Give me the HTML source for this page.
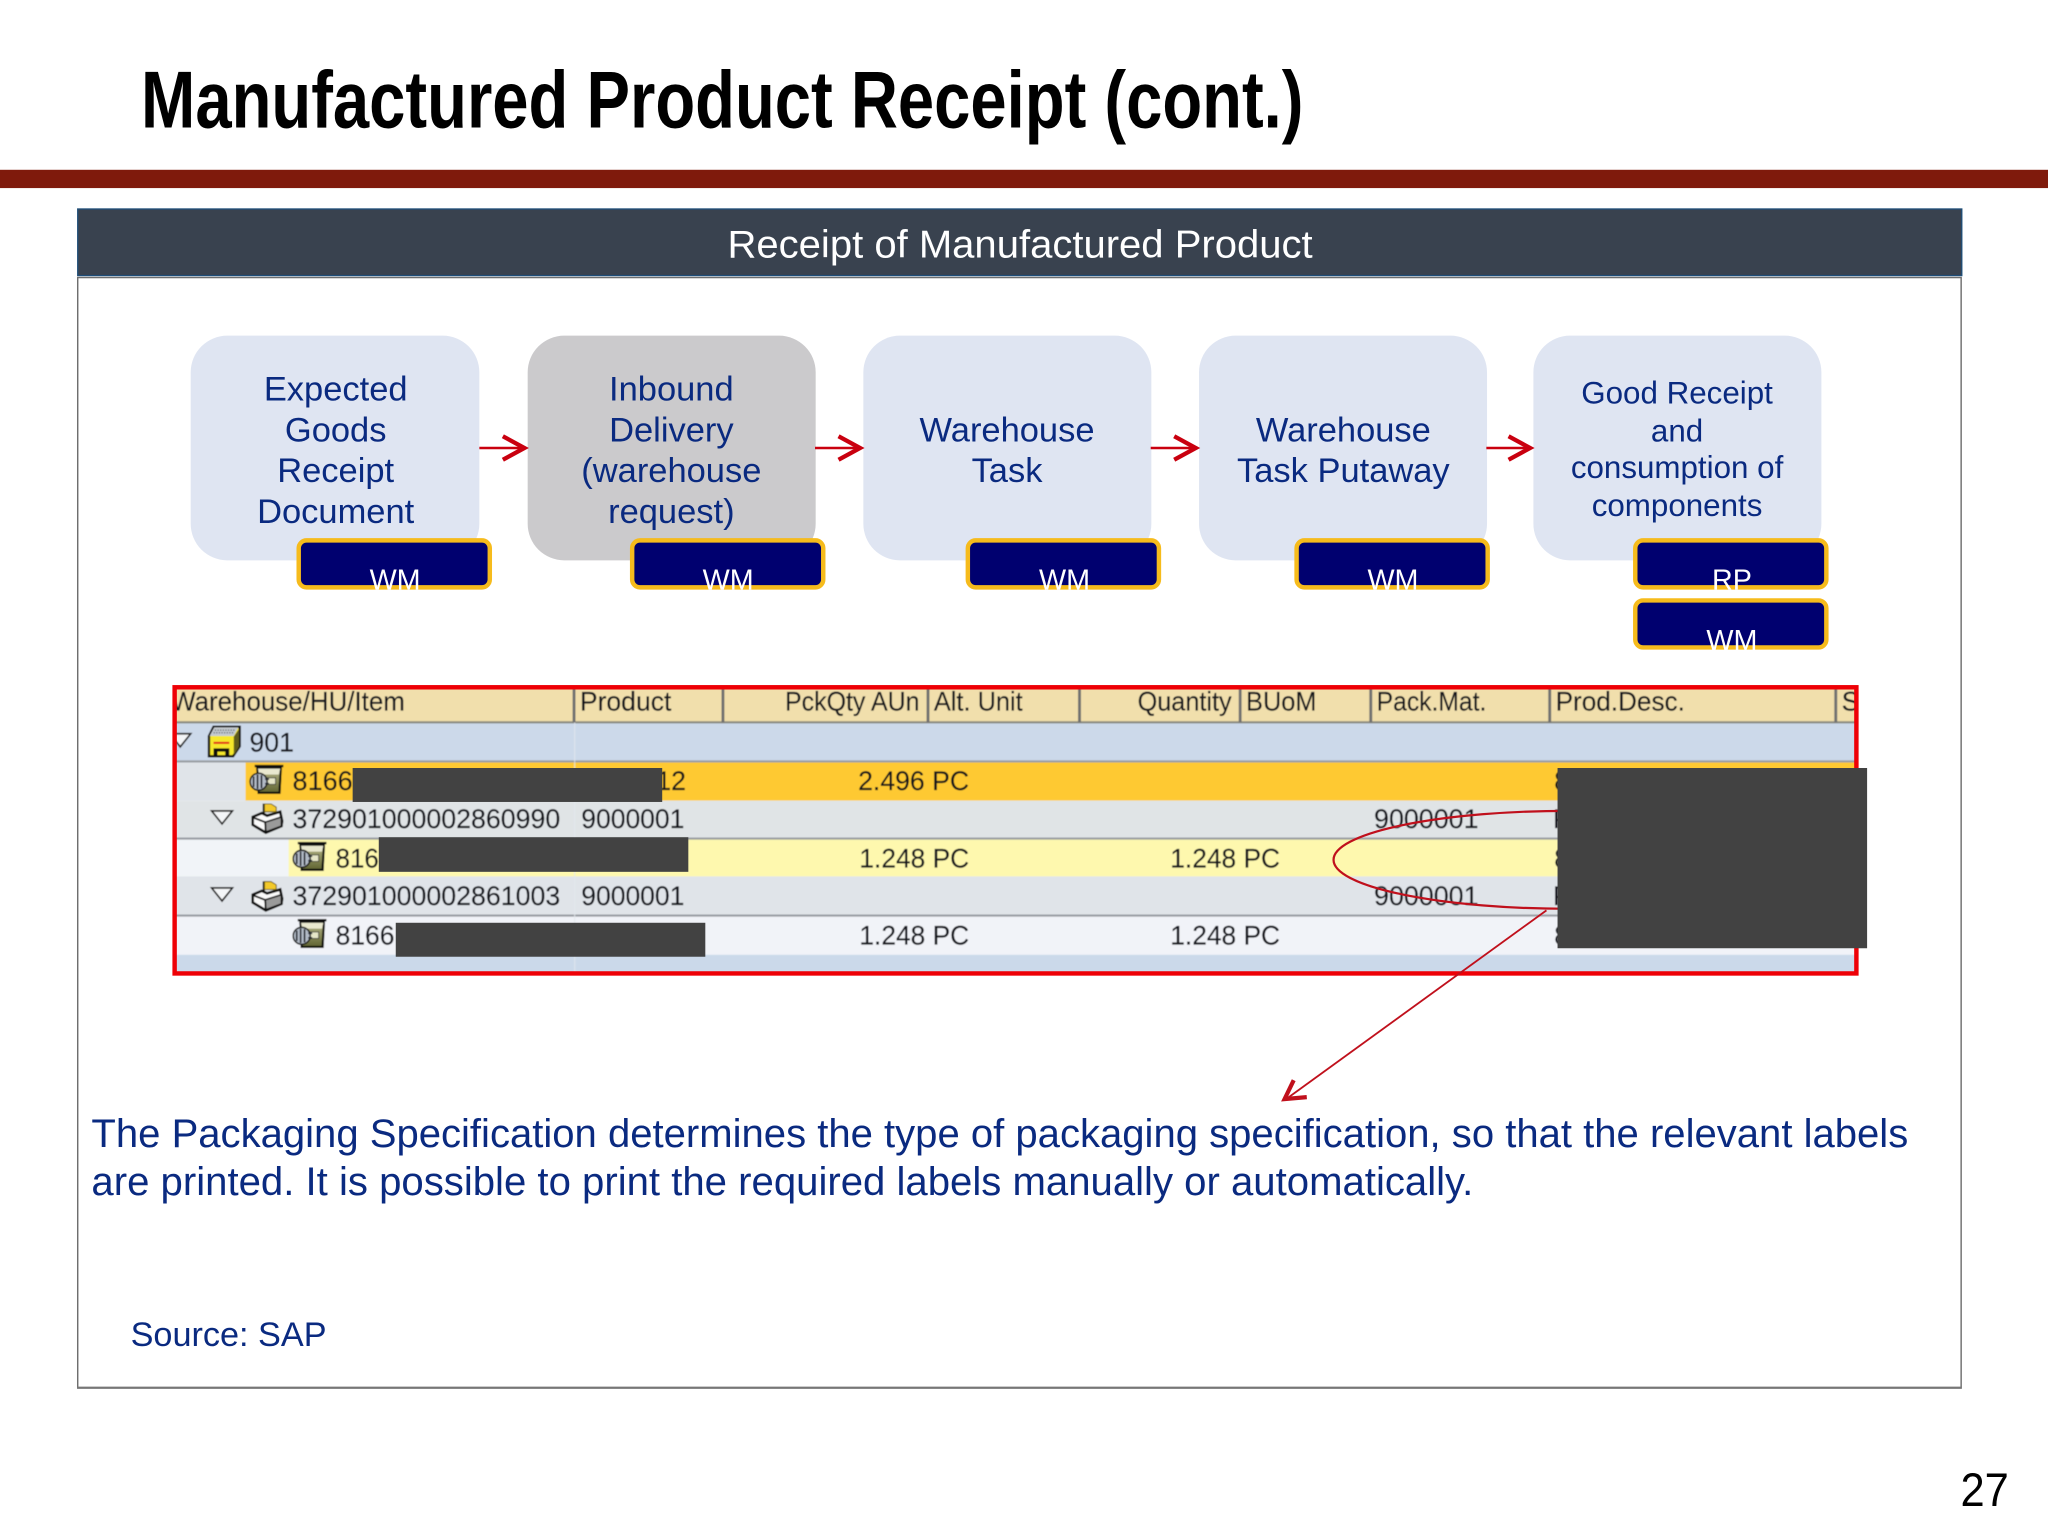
<!DOCTYPE html>
<html lang="en">
<head>
<meta charset="utf-8">
<title>Manufactured Product Receipt (cont.)</title>
<style>
html,body{margin:0;padding:0;background:#fff;width:2048px;height:1536px;overflow:hidden}
svg{display:block;width:2048px;height:1536px}
text{font-family:"Liberation Sans",Arial,sans-serif}
.b{fill:#0a2a80;font-size:26.4px;text-anchor:middle}
.s{fill:#0a2a80;font-size:24px;text-anchor:middle}
.w{fill:#fff;font-size:22px;text-anchor:middle}
.t{fill:#12161e;font-size:20.4px;stroke:#12161e;stroke-width:.12px}
.badge{fill:#00006f;stroke:#f6bb1c;stroke-width:3.4}
.box{fill:#dfe5f2}
.arr{fill:none;stroke:#c9000f}
.sep{stroke:#6f6f6f;stroke-width:2.2}
.rowsep{stroke:#9a9ea3;stroke-width:1.6}
</style>
</head>
<body>
<svg xmlns="http://www.w3.org/2000/svg" viewBox="0 0 1568 1176">
<defs>
<clipPath id="tc"><rect x="135" y="526" width="1285" height="219"/></clipPath>
<filter id="soft" x="-2%" y="-2%" width="104%" height="104%"><feGaussianBlur stdDeviation="0.32"/></filter>
<linearGradient id="olive" x1="0" y1="0" x2="0" y2="1"><stop offset="0" stop-color="#b9b98c"/><stop offset="1" stop-color="#5f6330"/></linearGradient>
<g id="bolt">
  <path d="M6 3 L24 3 L23 22 L7 22 Z" fill="url(#olive)" stroke="#111" stroke-width="1.7"/>
  <path d="M6.5 3.5 H23.5 L22.5 8 H7.5 Z" fill="#e9e8cf"/>
  <rect x="4" y="0.6" width="22" height="1.8" fill="#111"/>
  <rect x="13" y="10.5" width="7" height="5" fill="#e6e6c8" stroke="#333" stroke-width=".6"/>
  <ellipse cx="7" cy="13.5" rx="6.5" ry="6.5" fill="#b4bcc8" stroke="#1a1a1a" stroke-width="1.2"/>
  <path d="M3.2 9.5v8M6.2 8v11M9.2 8.5v10M12 11.5h3M12 15h3" stroke="#20262e" stroke-width="1.3" fill="none"/>
</g>
<g id="pack">
  <path d="M1 11 L8 8 L12 10 L22 7 L23.5 14 L23 18 L11 23 L1 17 Z" fill="#fafafa" stroke="#0c0c0c" stroke-width="2"/>
  <path d="M10.5 15 L23 11 L23 18 L11 22.5 Z" fill="#9a9a9a" stroke="#111" stroke-width="1.2"/>
  <path d="M1.5 11.5 L10.5 15 L11 22" fill="none" stroke="#111" stroke-width="1.4"/>
  <path d="M9.5 9 V0.8" stroke="#111" stroke-width="1.7"/>
  <path d="M10 1 L15 1 L19 3.5 L19 7 L10 7 Z" fill="#f3c92a" stroke="#6a5a10" stroke-width=".7"/>
</g>
<path id="tri" d="M1 0.8 H17 L9 10.8 Z" fill="#f4f6f8" stroke="#222" stroke-width="1.3"/>
</defs>

<rect width="1568" height="1176" fill="#fff"/>

<text x="108" y="97.5" font-size="61.5" font-weight="700" fill="#000" textLength="890" lengthAdjust="spacingAndGlyphs">Manufactured Product Receipt (cont.)</text>
<rect x="0" y="130" width="1568" height="14" fill="#7f1a0c"/>

<rect x="59.5" y="160" width="1442.5" height="51" fill="#39424f" stroke="#1f4e79" stroke-width="1"/>
<text x="781" y="197" font-size="30" fill="#fff" text-anchor="middle" textLength="448" lengthAdjust="spacingAndGlyphs">Receipt of Manufactured Product</text>
<rect x="59.5" y="212.5" width="1442" height="850" fill="#fff" stroke="#6e6e6e" stroke-width="1.1"/>
<line x1="59" y1="1062.5" x2="1502" y2="1062.5" stroke="#777" stroke-width="1.8"/>

<!-- process boxes -->
<rect class="box" x="146" y="257" width="221" height="172" rx="28"/>
<rect x="404" y="257" width="220.5" height="172" rx="28" fill="#cbcacc"/>
<rect class="box" x="661" y="257" width="220.5" height="172" rx="28"/>
<rect class="box" x="918" y="257" width="220.5" height="172" rx="28"/>
<rect class="box" x="1174" y="257" width="220.5" height="172" rx="28"/>

<text class="b" x="257" y="306.5">Expected</text>
<text class="b" x="257" y="338">Goods</text>
<text class="b" x="257" y="369">Receipt</text>
<text class="b" x="257" y="400.5">Document</text>

<text class="b" x="514" y="306.5">Inbound</text>
<text class="b" x="514" y="338">Delivery</text>
<text class="b" x="514" y="369">(warehouse</text>
<text class="b" x="514" y="400.5">request)</text>

<text class="b" x="771" y="338">Warehouse</text>
<text class="b" x="771" y="369">Task</text>

<text class="b" x="1028.5" y="338">Warehouse</text>
<text class="b" x="1028.5" y="369">Task Putaway</text>

<text class="s" x="1284" y="309">Good Receipt</text>
<text class="s" x="1284" y="338">and</text>
<text class="s" x="1284" y="366">consumption of</text>
<text class="s" x="1284" y="395">components</text>

<!-- arrows -->
<g class="arr">
  <path d="M367 343H400" stroke-width="2"/><path d="M385 334L401.5 343L385 352" stroke-width="3.3"/>
  <path d="M624 343H657" stroke-width="2"/><path d="M642 334L658.5 343L642 352" stroke-width="3.3"/>
  <path d="M881 343H914" stroke-width="2"/><path d="M899 334L915.5 343L899 352" stroke-width="3.3"/>
  <path d="M1138 343H1170" stroke-width="2"/><path d="M1155 334L1171.5 343L1155 352" stroke-width="3.3"/>
</g>

<!-- badges -->
<rect class="badge" x="228.7" y="413.7" width="146.3" height="36" rx="6"/>
<rect class="badge" x="484" y="413.7" width="146.3" height="36" rx="6"/>
<rect class="badge" x="741" y="413.7" width="146.3" height="36" rx="6"/>
<rect class="badge" x="992.7" y="413.7" width="146.3" height="36" rx="6"/>
<rect class="badge" x="1252" y="413.7" width="146.3" height="36" rx="6"/>
<rect class="badge" x="1252" y="459.7" width="146.3" height="36" rx="6"/>
<text class="w" x="302.5" y="451.5">WM</text>
<text class="w" x="557.5" y="451.5">WM</text>
<text class="w" x="815" y="451.5">WM</text>
<text class="w" x="1066.5" y="451.5">WM</text>
<text class="w" x="1326" y="451.5">RP</text>
<text class="w" x="1326" y="497.5">WM</text>

<!-- table -->
<g clip-path="url(#tc)"><g filter="url(#soft)">
  <rect x="133" y="526" width="1290" height="27" fill="#f1dfac"/>
  <rect x="133" y="553" width="1290" height="30" fill="#ccd9ea"/>
  <rect x="133" y="583" width="1290" height="30" fill="#e0e4e9"/>
  <rect x="188" y="583" width="1235" height="30" fill="#fec933"/>
  <rect x="133" y="613" width="1290" height="29" fill="#e0e4e6"/>
  <rect x="133" y="642" width="1290" height="29" fill="#f1f4f8"/>
  <rect x="221" y="642" width="1202" height="29" fill="#fef8ae"/>
  <rect x="133" y="671" width="1290" height="30" fill="#e0e4e9"/>
  <rect x="133" y="701" width="1290" height="30" fill="#f1f3f8"/>
  <rect x="133" y="731" width="1290" height="15" fill="#cbd9ea"/>

  <line x1="133" y1="553" x2="1423" y2="553" stroke="#8a8a80" stroke-width="1.6"/>
  <line class="rowsep" x1="133" y1="583" x2="1423" y2="583"/>
  <line class="rowsep" x1="133" y1="642" x2="1423" y2="642"/>
  <line class="rowsep" x1="133" y1="701" x2="1423" y2="701"/>
  <line x1="440" y1="553" x2="440" y2="745" stroke="#e4e8ee" stroke-width="1" opacity=".7"/>

  <line class="sep" x1="439.5" y1="526" x2="439.5" y2="553"/>
  <line class="sep" x1="553.5" y1="526" x2="553.5" y2="553"/>
  <line class="sep" x1="710.5" y1="526" x2="710.5" y2="553"/>
  <line class="sep" x1="826.5" y1="526" x2="826.5" y2="553"/>
  <line class="sep" x1="949.5" y1="526" x2="949.5" y2="553"/>
  <line class="sep" x1="1049.5" y1="526" x2="1049.5" y2="553"/>
  <line class="sep" x1="1186.5" y1="526" x2="1186.5" y2="553"/>
  <line class="sep" x1="1405.5" y1="526" x2="1405.5" y2="553"/>

  <text class="t" x="131" y="544" textLength="179" lengthAdjust="spacingAndGlyphs">Warehouse/HU/Item</text>
  <text class="t" x="444" y="544" textLength="70" lengthAdjust="spacingAndGlyphs">Product</text>
  <text class="t" x="601" y="544" textLength="103" lengthAdjust="spacingAndGlyphs">PckQty AUn</text>
  <text class="t" x="715" y="544" textLength="68" lengthAdjust="spacingAndGlyphs">Alt. Unit</text>
  <text class="t" x="871" y="544" textLength="72" lengthAdjust="spacingAndGlyphs">Quantity</text>
  <text class="t" x="954" y="544" textLength="54" lengthAdjust="spacingAndGlyphs">BUoM</text>
  <text class="t" x="1054" y="544" textLength="84" lengthAdjust="spacingAndGlyphs">Pack.Mat.</text>
  <text class="t" x="1191" y="544" textLength="99" lengthAdjust="spacingAndGlyphs">Prod.Desc.</text>
  <text class="t" x="1410" y="544">S</text>

  <text class="t" x="191" y="575.5" textLength="34" lengthAdjust="spacingAndGlyphs">901</text>
  <text class="t" x="224" y="605" textLength="46" lengthAdjust="spacingAndGlyphs">8166</text>
  <text class="t" x="502.5" y="605">12</text>
  <text class="t" x="657" y="605" textLength="85" lengthAdjust="spacingAndGlyphs">2.496 PC</text>
  <text class="t" x="1190" y="605">8</text>

  <text class="t" x="224" y="634" textLength="205" lengthAdjust="spacingAndGlyphs">372901000002860990</text>
  <text class="t" x="445" y="634" textLength="79" lengthAdjust="spacingAndGlyphs">9000001</text>
  <text class="t" x="1052" y="634" textLength="80" lengthAdjust="spacingAndGlyphs">9000001</text>
  <text class="t" x="1189" y="634">P</text>

  <text class="t" x="257" y="664" textLength="33" lengthAdjust="spacingAndGlyphs">816</text>
  <text class="t" x="658" y="664" textLength="84" lengthAdjust="spacingAndGlyphs">1.248 PC</text>
  <text class="t" x="896" y="664" textLength="84" lengthAdjust="spacingAndGlyphs">1.248 PC</text>
  <text class="t" x="1190" y="664">8</text>

  <text class="t" x="224" y="693" textLength="205" lengthAdjust="spacingAndGlyphs">372901000002861003</text>
  <text class="t" x="445" y="693" textLength="79" lengthAdjust="spacingAndGlyphs">9000001</text>
  <text class="t" x="1052" y="693" textLength="80" lengthAdjust="spacingAndGlyphs">9000001</text>
  <text class="t" x="1189" y="693">P</text>

  <text class="t" x="257" y="723" textLength="45" lengthAdjust="spacingAndGlyphs">8166</text>
  <text class="t" x="658" y="723" textLength="84" lengthAdjust="spacingAndGlyphs">1.248 PC</text>
  <text class="t" x="896" y="723" textLength="84" lengthAdjust="spacingAndGlyphs">1.248 PC</text>
  <text class="t" x="1190" y="723">8</text>

  <!-- tree triangles -->
  <use href="#tri" x="129" y="561"/>
  <use href="#tri" x="161" y="620"/>
  <use href="#tri" x="161" y="679"/>

  <!-- warehouse icon -->
  <g transform="translate(158.5,555.5)">
    <path d="M1.5 8 L5 1 H25 V16 L20 23.5 H1.5 Z" fill="#f6e82c" stroke="#0c0c0c" stroke-width="1.8"/>
    <path d="M2 8 L5.5 1.5 H24 L20.5 8 Z" fill="#c4cad0"/>
    <path d="M6 3.5 H21 M5 5.5 H20" stroke="#5b6268" stroke-width="1" stroke-dasharray="1 1" fill="none"/>
    <path d="M20.5 8.5 V23 L24.5 16 V2.5 Z" fill="#5e5c1a"/>
    <rect x="5" y="12.5" width="12" height="1.5" fill="#e0201c"/>
    <path d="M5 23.5 V17.5 H17 V23.5 H14 V20 H8 V23.5 Z" fill="#0c0c0c"/>
  </g>
  <use href="#bolt" x="191" y="585"/>
  <use href="#pack" x="192.5" y="614.5"/>
  <use href="#bolt" x="224" y="644"/>
  <use href="#pack" x="192.5" y="674"/>
  <use href="#bolt" x="224" y="703"/>
</g></g>

<!-- highlight ellipse -->
<ellipse cx="1201" cy="658.3" rx="180" ry="37.5" fill="none" stroke="#c0101c" stroke-width="1.7"/>

<!-- red frame -->
<rect x="133.7" y="526.2" width="1287.6" height="219.1" fill="none" stroke="#ee0006" stroke-width="3.4"/>

<!-- redactions -->
<rect x="270" y="588" width="237" height="26" fill="#424242"/>
<rect x="290" y="641" width="237" height="26.5" fill="#424242"/>
<rect x="303" y="706.5" width="237" height="26" fill="#424242"/>
<rect x="1192.5" y="588" width="237" height="138" fill="#424242"/>

<!-- callout arrow -->
<path d="M1184 697 L984 842" fill="none" stroke="#c0101c" stroke-width="1.4"/>
<path d="M990.5 827 L983.5 841.5 L1000.5 840" fill="none" stroke="#c0101c" stroke-width="3.2"/>

<!-- paragraph -->
<text x="70" y="878" font-size="30.5" fill="#0a2a80" textLength="1391" lengthAdjust="spacingAndGlyphs">The Packaging Specification determines the type of packaging specification, so that the relevant labels</text>
<text x="70" y="915" font-size="30.5" fill="#0a2a80" textLength="1058" lengthAdjust="spacingAndGlyphs">are printed. It is possible to print the required labels manually or automatically.</text>
<text x="100" y="1030.5" font-size="26.2" fill="#0a2a80" textLength="150" lengthAdjust="spacingAndGlyphs">Source: SAP</text>
<text x="1501" y="1153" font-size="36" fill="#000" textLength="37" lengthAdjust="spacingAndGlyphs">27</text>
</svg>
</body>
</html>
